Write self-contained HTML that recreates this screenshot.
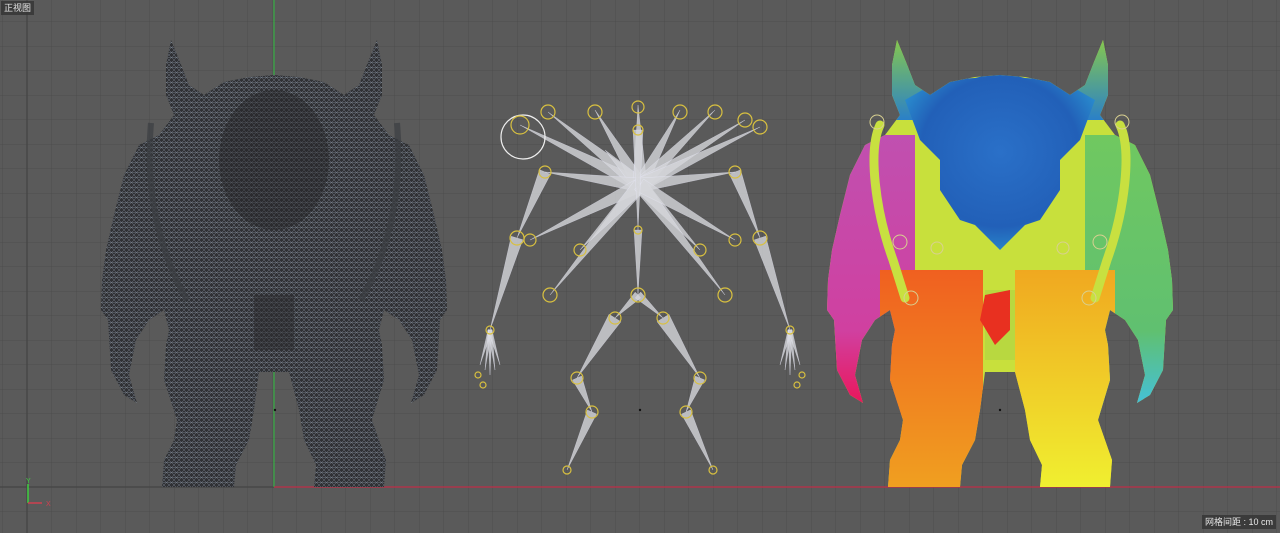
<!DOCTYPE html>
<html><head><meta charset="utf-8">
<style>
html,body{margin:0;padding:0;background:#5a5a5a;width:1280px;height:533px;overflow:hidden}
svg{display:block}
.lbl{position:absolute;font-family:"Liberation Sans","Noto Sans CJK SC",sans-serif;color:#e8e8e8;font-size:9px;background:rgba(50,50,50,.75);padding:1px 3px;line-height:12px;white-space:nowrap}
</style></head><body>
<div style="position:relative;width:1280px;height:533px">
<svg id="s" width="1280" height="533" viewBox="0 0 1280 533" xmlns="http://www.w3.org/2000/svg">
<defs>
<pattern id="grid" x="2.5" y="21.5" width="24.5" height="24.5" patternUnits="userSpaceOnUse">
<path d="M0 0H24.5M0 0V24.5" stroke="#4d4d4d" stroke-width="1" fill="none"/>
</pattern>
<pattern id="mesh" width="5" height="5" patternUnits="userSpaceOnUse">
<rect width="5" height="5" fill="#303134"/>
<path d="M0 0L5 5M5 0L0 5M0 2.5H5" stroke="#77808c" stroke-width=".45"/>
</pattern>
<path id="sil" d="M897,40 L906,62 915,85 930,95 950,82 975,77 1000,75 1025,77 1050,82 1070,95 1085,85 1094,62 1103,40 1108,65 1108,95 1100,115 1115,135 1135,145 1150,175 1160,215 1168,250 1172,280 1173,310 1166,320 1163,370 1150,395 1137,403 1145,375 1138,340 1125,320 1110,310 1105,330 1108,345 1110,380 1098,420 1105,440 1112,460 1110,487 1040,487 1042,465 1030,440 1025,410 1015,372 985,372 980,410 975,440 962,465 960,487 888,487 890,460 900,440 903,420 890,380 892,345 895,330 890,310 875,320 862,340 855,375 863,403 850,395 837,370 834,320 827,310 828,280 832,250 840,215 850,175 865,145 885,135 900,115 892,95 892,65Z"/>
<clipPath id="clipR"><use href="#sil"/></clipPath>
<linearGradient id="mag" x1="0" y1="0" x2="0" y2="1"><stop offset="0" stop-color="#c050b0"/><stop offset=".7" stop-color="#d040a0"/><stop offset="1" stop-color="#ee1050"/></linearGradient>
<linearGradient id="grn" x1="0" y1="0" x2="0" y2="1"><stop offset="0" stop-color="#70c860"/><stop offset=".7" stop-color="#60c070"/><stop offset="1" stop-color="#40c0e8"/></linearGradient>
<linearGradient id="org" x1="0" y1="0" x2="0" y2="1"><stop offset="0" stop-color="#f06020"/><stop offset="1" stop-color="#f0a020"/></linearGradient>
<linearGradient id="yel" x1="0" y1="0" x2="0" y2="1"><stop offset="0" stop-color="#f0a820"/><stop offset="1" stop-color="#f0f030"/></linearGradient>
<radialGradient id="blu" cx=".5" cy=".45" r=".6"><stop offset="0" stop-color="#2a70c8"/><stop offset=".7" stop-color="#2260b8"/><stop offset="1" stop-color="#2a90d0"/></radialGradient>
<linearGradient id="horn" x1="0" y1="0" x2="0" y2="1"><stop offset="0" stop-color="#90d040"/><stop offset="1" stop-color="#2a80c8"/></linearGradient>
</defs>
<rect width="1280" height="533" fill="#5a5a5a"/>
<rect width="1280" height="533" fill="url(#grid)"/>
<line x1="27" y1="0" x2="27" y2="533" stroke="#444" stroke-width="1.2"/>
<line x1="0" y1="487" x2="1280" y2="487" stroke="#444" stroke-width="1.2"/>
<line x1="274" y1="0" x2="274" y2="487" stroke="#2fbf3f" stroke-width="1"/>
<line x1="274" y1="487" x2="1280" y2="487" stroke="#c0304a" stroke-width="1.2"/>
<!-- left mesh figure -->
<g transform="translate(-726,0)">
<use href="#sil" fill="url(#mesh)"/>
<ellipse cx="1000" cy="160" rx="55" ry="70" fill="#252527" opacity=".45"/>
<path d="M877,123 C870,200 890,260 913,300 M1123,123 C1130,200 1110,260 1087,300" stroke="#3a3d42" stroke-width="6" fill="none" opacity=".7"/>
<rect x="980" y="295" width="40" height="55" fill="#2a2a2c" opacity=".5"/>
</g>
<!-- right colored figure -->
<g clip-path="url(#clipR)">
<rect x="800" y="30" width="400" height="470" fill="#c8e03c"/>
<rect x="815" y="135" width="100" height="280" fill="url(#mag)"/>
<rect x="1085" y="135" width="100" height="280" fill="url(#grn)"/>
<rect x="880" y="270" width="103" height="220" fill="url(#org)"/>
<rect x="1015" y="270" width="100" height="220" fill="url(#yel)"/>
<rect x="985" y="290" width="30" height="70" fill="#b8d840"/>
<path d="M985,295 L1010,290 1010,330 995,345 980,320Z" fill="#e83020"/>
<rect x="880" y="30" width="60" height="90" fill="url(#horn)"/>
<rect x="1060" y="30" width="60" height="90" fill="url(#horn)"/>
<path d="M905,100 L940,80 975,78 1000,72 1025,78 1060,80 1095,100 1080,140 1060,160 1060,190 1040,220 1025,225 1000,250 975,225 960,220 940,190 940,160 920,140Z" fill="url(#blu)"/>
</g>
<path d="M880,125 C868,150 875,210 893,260 L905,298 M1120,125 C1132,150 1125,210 1107,260 L1095,298" stroke="#c8e040" stroke-width="9" fill="none" stroke-linecap="round"/>
<g fill="none" stroke="#d8d090" stroke-width="1">
<circle cx="877" cy="122" r="7"/><circle cx="1122" cy="122" r="7"/><circle cx="900" cy="242" r="7"/><circle cx="1100" cy="242" r="7"/><circle cx="911" cy="298" r="7"/><circle cx="1089" cy="298" r="7"/><circle cx="937" cy="248" r="6"/><circle cx="1063" cy="248" r="6"/>
</g>
<g id="skel"></g>
<circle cx="275" cy="410" r="1.2" fill="#111"/><circle cx="640" cy="410" r="1.2" fill="#111"/><circle cx="1000" cy="410" r="1.2" fill="#111"/>
<line x1="28" y1="484" x2="28" y2="503" stroke="#3fd040" stroke-width="1.5"/>
<line x1="28" y1="503" x2="42" y2="503" stroke="#d04050" stroke-width="1.5"/>
<text x="26" y="483" font-family="Liberation Sans,sans-serif" font-size="7" fill="#3fd040">Y</text>
<text x="46" y="506" font-family="Liberation Sans,sans-serif" font-size="7" fill="#d04050">X</text>
</svg>
<div class="lbl" style="left:1px;top:1px">正视图</div>
<div class="lbl" style="left:1202px;top:515px">网格间距 : 10 cm</div>
</div>
<script>
var g=document.getElementById('skel'),out='';
function cone(a,b,w){var dx=b[0]-a[0],dy=b[1]-a[1],l=Math.hypot(dx,dy),nx=-dy/l*w,ny=dx/l*w;
out+='<polygon points="'+(a[0]+nx)+','+(a[1]+ny)+' '+(a[0]-nx)+','+(a[1]-ny)+' '+b[0]+','+b[1]+'" fill="#d4d6da" fill-opacity=".8" stroke="#eef" stroke-opacity=".5" stroke-width=".5"/>';}
var C=[640,185];
[[520,125],[548,112],[595,110],[605,150],[638,105],[680,110],[715,110],[745,120],[760,127],[545,172],[735,172],[530,240],[550,295],[580,250],[700,250],[725,295],[735,240]].forEach(function(p){cone(C,p,7)});
cone([545,172],[517,238],6);cone([735,172],[760,238],6);
cone([517,238],[490,330],6);cone([760,238],[790,330],6);
cone([638,130],[638,230],5);cone([638,230],[638,295],4);
cone([638,295],[615,318],4);cone([638,295],[663,318],4);
cone([615,318],[577,378],7);cone([663,318],[700,378],7);
cone([577,378],[592,412],5);cone([700,378],[686,412],5);
cone([592,412],[567,470],5);cone([686,412],[713,470],5);
[[490,330],[790,330]].forEach(function(h){for(var i=-2;i<=2;i++){cone(h,[h[0]+i*5,h[1]+45+Math.abs(i)*-5],2)}});
var J=[[523,137,22],[520,125,9],[548,112,7],[595,112,7],[638,107,6],[680,112,7],[715,112,7],[745,120,7],[760,127,7],[545,172,6],[735,172,6],[517,238,7],[760,238,7],[580,250,6],[700,250,6],[530,240,6],[735,240,6],[550,295,7],[725,295,7],[638,295,7],[615,318,6],[663,318,6],[577,378,6],[700,378,6],[592,412,6],[686,412,6],[567,470,4],[713,470,4],[490,330,4],[790,330,4],[483,385,3],[797,385,3],[478,375,3],[802,375,3],[638,130,5],[638,230,4]];
J.forEach(function(j){out+='<circle cx="'+j[0]+'" cy="'+j[1]+'" r="'+j[2]+'" fill="none" stroke="'+(j[2]>15?'#eee':'#d8c040')+'" stroke-width="1.2"/>'});
g.innerHTML=out;
</script>
</body></html>
